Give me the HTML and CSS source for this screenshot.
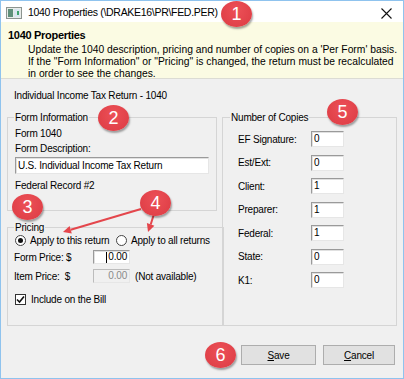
FILE: index.html
```html
<!DOCTYPE html>
<html lang="en">
<head>
    <meta charset="UTF-8">
    <title>1040 Properties</title>
    <link rel="stylesheet" href="styles.css">
</head>
<body>
    <div class="window">
        <!-- Title bar -->
        <div class="titlebar">
            <svg class="app-icon" width="16" height="12" viewBox="0 0 16 12">
                <rect x="0.5" y="0.5" width="15" height="11" fill="#e8ecea" stroke="#8c9490"/>
                <rect x="2" y="2" width="5" height="8" fill="#5f8f7a"/>
                <rect x="8" y="2" width="6" height="8" fill="#d9e6ef"/>
                <rect x="11" y="4" width="2" height="4" fill="#3fa36b"/>
            </svg>
            <span class="title">1040 Properties (\DRAKE16\PR\FED.PER)</span>
            <svg class="close" width="11" height="11" viewBox="0 0 11 11">
                <path d="M0.5 0.5 L10.5 10.5 M10.5 0.5 L0.5 10.5" stroke="#111" stroke-width="1.1"/>
            </svg>
        </div>

        <!-- Yellow help header -->
        <div class="header">
            <div class="header-title">1040 Properties</div>
            <p class="header-text">Update the 1040 description, pricing and number of copies on a 'Per Form' basis.<br>If the "Form Information" or "Pricing" is changed, the return must be recalculated<br>in order to see the changes.</p>
        </div>

        <div class="content">
            <div class="form-name">Individual Income Tax Return - 1040</div>

            <div class="columns">
                <div class="left-col">
                    <fieldset class="group group-info">
                        <legend>Form Information</legend>
                        <div class="line first">Form 1040</div>
                        <div class="line">Form Description:</div>
                        <input class="textbox wide" type="text" value="U.S. Individual Income Tax Return">
                        <div class="line record">Federal Record #2</div>
                    </fieldset>

                    <fieldset class="group group-pricing">
                        <legend>Pricing</legend>
                        <div class="radio-row">
                            <span class="radio checked"></span>
                            <span class="radio-label">Apply to this return</span>
                            <span class="radio"></span>
                            <span class="radio-label">Apply to all returns</span>
                        </div>
                        <div class="price-row">
                            <span class="price-label">Form Price: $</span>
                            <span class="textbox price"><span class="caret"></span>0.00</span>
                        </div>
                        <div class="price-row">
                            <span class="price-label">Item Price: &nbsp;$</span>
                            <span class="textbox price disabled">0.00</span>
                            <span class="note">(Not available)</span>
                        </div>
                        <div class="check-row">
                            <span class="checkbox">
                                <svg width="9" height="9" viewBox="0 0 9 9"><path d="M1 4.5 L3.5 7 L8 1.5" fill="none" stroke="#111" stroke-width="1.6"/></svg>
                            </span>
                            <span>Include on the Bill</span>
                        </div>
                    </fieldset>
                </div>

                <fieldset class="group group-copies">
                    <legend>Number of Copies</legend>
                    <div class="copy-row"><span class="copy-label">EF Signature:</span><span class="textbox copy">0</span></div>
                    <div class="copy-row"><span class="copy-label">Est/Ext:</span><span class="textbox copy">0</span></div>
                    <div class="copy-row"><span class="copy-label">Client:</span><span class="textbox copy">1</span></div>
                    <div class="copy-row"><span class="copy-label">Preparer:</span><span class="textbox copy">1</span></div>
                    <div class="copy-row"><span class="copy-label">Federal:</span><span class="textbox copy">1</span></div>
                    <div class="copy-row"><span class="copy-label">State:</span><span class="textbox copy">0</span></div>
                    <div class="copy-row"><span class="copy-label">K1:</span><span class="textbox copy">0</span></div>
                </fieldset>
            </div>

            <div class="buttons">
                <button class="btn"><u>S</u>ave</button>
                <button class="btn cancel"><u>C</u>ancel</button>
            </div>
        </div>

        <!-- Annotation arrows -->
        <svg class="arrows" width="404" height="379" viewBox="0 0 404 379">
            <g stroke="#e4464c" stroke-width="2" fill="#e4464c">
                <line x1="141" y1="209" x2="70.7" y2="229.7"/>
                <polygon points="63,232 71.8,233.6 69.6,225.9" stroke="none"/>
                <line x1="154" y1="214" x2="150.7" y2="224.5"/>
                <polygon points="148,232 154.4,225.8 146.9,223.1" stroke="none"/>
            </g>
        </svg>

        <!-- Numbered callouts -->
        <span class="badge b1">1</span>
        <span class="badge b2">2</span>
        <span class="badge b3">3</span>
        <span class="badge b4">4</span>
        <span class="badge b5">5</span>
        <span class="badge b6">6</span>
    </div>
</body>
</html>
```

FILE: styles.css
```css
* {
    margin: 0;
    padding: 0;
    box-sizing: border-box;
}
body {
    font-family: "Liberation Sans", Arial, sans-serif;
    font-size: 10px;
    line-height: 13px;
    letter-spacing: -0.2px;
    color: #000;
    background: #fff;
}
.window {
    position: relative;
    width: 404px;
    height: 379px;
    border: 1px solid #8fc3ee;
    background: #f0f0f0;
    overflow: hidden;
}
/* Title bar */
.titlebar {
    height: 21px;
    background: #fff;
    display: flex;
    align-items: center;
    padding-left: 5px;
    white-space: nowrap;
}
.app-icon {
    margin-right: 6px;
    margin-top: 2px;
}
.title {
    font-size: 10.5px;
    letter-spacing: -0.3px;
    margin-top: 1px;
}
.close {
    margin-left: auto;
    margin-right: 11px;
    margin-top: 3px;
}
/* Help header */
.header {
    height: 57px;
    background: #fbfbe3;
    border-bottom: 1px solid #dcdcd4;
    padding: 7px 0 0 7px;
    white-space: nowrap;
}
.header-title {
    font-weight: bold;
    font-size: 11px;
    letter-spacing: -0.3px;
    margin-bottom: 2px;
}
.header-text {
    padding-left: 20px;
    font-size: 10.3px;
    letter-spacing: 0;
    line-height: 12px;
}
/* Dialog body */
.content {
    padding: 10px 6px 0 6px;
    white-space: nowrap;
}
.form-name {
    padding-left: 7px;
}
.columns {
    display: flex;
    gap: 5px;
    margin-top: 9px;
}
.left-col {
    display: flex;
    flex-direction: column;
    gap: 10px;
    width: 210px;
}
.group {
    border: 1px solid #d5d5d5;
    padding: 0 6px 0 7px;
}
.group legend {
    padding: 0 1px;
    margin-left: -1px;
}
.group-info {
    height: 100px;
}
.group-pricing {
    height: 105px;
}
.group-copies {
    width: 175px;
    height: 215px;
    padding-left: 15px;
    padding-top: 7px;
}
.group-copies legend {
    margin-left: -8px;
}
.line.first {
    margin-top: 3px;
}
.line {
    margin-bottom: 2px;
}
.record {
    margin-top: 5px;
}
.textbox {
    display: inline-block;
    height: 16px;
    background: #fff;
    border: 1px solid;
    border-color: #9a9a9a #e6e6e6 #e6e6e6 #9a9a9a;
    box-shadow: inset 1px 1px 0 #e0e0e0;
    font: inherit;
    letter-spacing: inherit;
    color: #000;
    line-height: 14px;
    padding: 0 2px;
}
.textbox.wide {
    width: 194px;
    height: 17px;
    outline: none;
}
/* Pricing */
.radio-row {
    display: flex;
    align-items: center;
    height: 13px;
}
.radio {
    width: 11px;
    height: 11px;
    border-radius: 50%;
    border: 1px solid #444;
    background: #fff;
    position: relative;
    margin-right: 4px;
}
.radio.checked:after {
    content: '';
    position: absolute;
    left: 2px;
    top: 2px;
    width: 5px;
    height: 5px;
    border-radius: 50%;
    background: #111;
}
.radio-label {
    width: 86px;
}
.price-row {
    display: flex;
    align-items: center;
    height: 18px;
    margin-top: 1px;
}
.price-row:first-of-type {
    margin-top: 4px;
}
.price-label {
    width: 79px;
    margin-left: -1px;
}
.textbox.price {
    width: 37px;
    height: 14px;
    line-height: 12px;
    text-align: right;
}
.caret {
    display: inline-block;
    width: 1px;
    height: 11px;
    background: #000;
    vertical-align: top;
    margin: 1px 1px 0 0;
}
.textbox.price.disabled {
    background: #f0f0f0;
    color: #8a8a8a;
    border-color: #bcbcbc #e6e6e6 #e6e6e6 #bcbcbc;
    box-shadow: none;
}
.note {
    margin-left: 5px;
}
.check-row {
    display: flex;
    align-items: center;
    margin-top: 8px;
}
.checkbox {
    width: 11px;
    height: 11px;
    border: 1px solid #333;
    background: #fff;
    display: flex;
    align-items: center;
    justify-content: center;
    margin-right: 5px;
}
/* Number of copies */
.copy-row {
    display: flex;
    align-items: center;
    height: 16px;
    margin-bottom: 7.5px;
}
.copy-label {
    width: 73px;
}
.textbox.copy {
    width: 33px;
}
/* Buttons */
.buttons {
    display: flex;
    justify-content: flex-end;
    gap: 7px;
    margin-top: 19px;
    padding-right: 2px;
}
.btn {
    width: 75px;
    height: 20px;
    background: #e1e1e1;
    border: 1px solid #adadad;
    font: inherit;
    letter-spacing: inherit;
    color: #000;
}
.btn.cancel {
    width: 72px;
}
/* Callouts */
.arrows {
    position: absolute;
    left: -1px;
    top: -1px;
    pointer-events: none;
}
.badge {
    position: absolute;
    width: 31px;
    height: 26px;
    border-radius: 50%;
    background: radial-gradient(ellipse at 50% 35%, #ec5057 0%, #dc3b43 100%);
    box-shadow: 1px 2px 2px rgba(0, 0, 0, 0.35);
    color: #fff;
    font-size: 18px;
    letter-spacing: 0;
    line-height: 26px;
    text-align: center;
}
.b1 { left: 220px; top: 0px; }
.b2 { left: 97px; top: 104px; }
.b3 { left: 11px; top: 193px; }
.b4 { left: 139px; top: 189px; }
.b5 { left: 326px; top: 98px; }
.b6 { left: 204px; top: 341px; }
```
